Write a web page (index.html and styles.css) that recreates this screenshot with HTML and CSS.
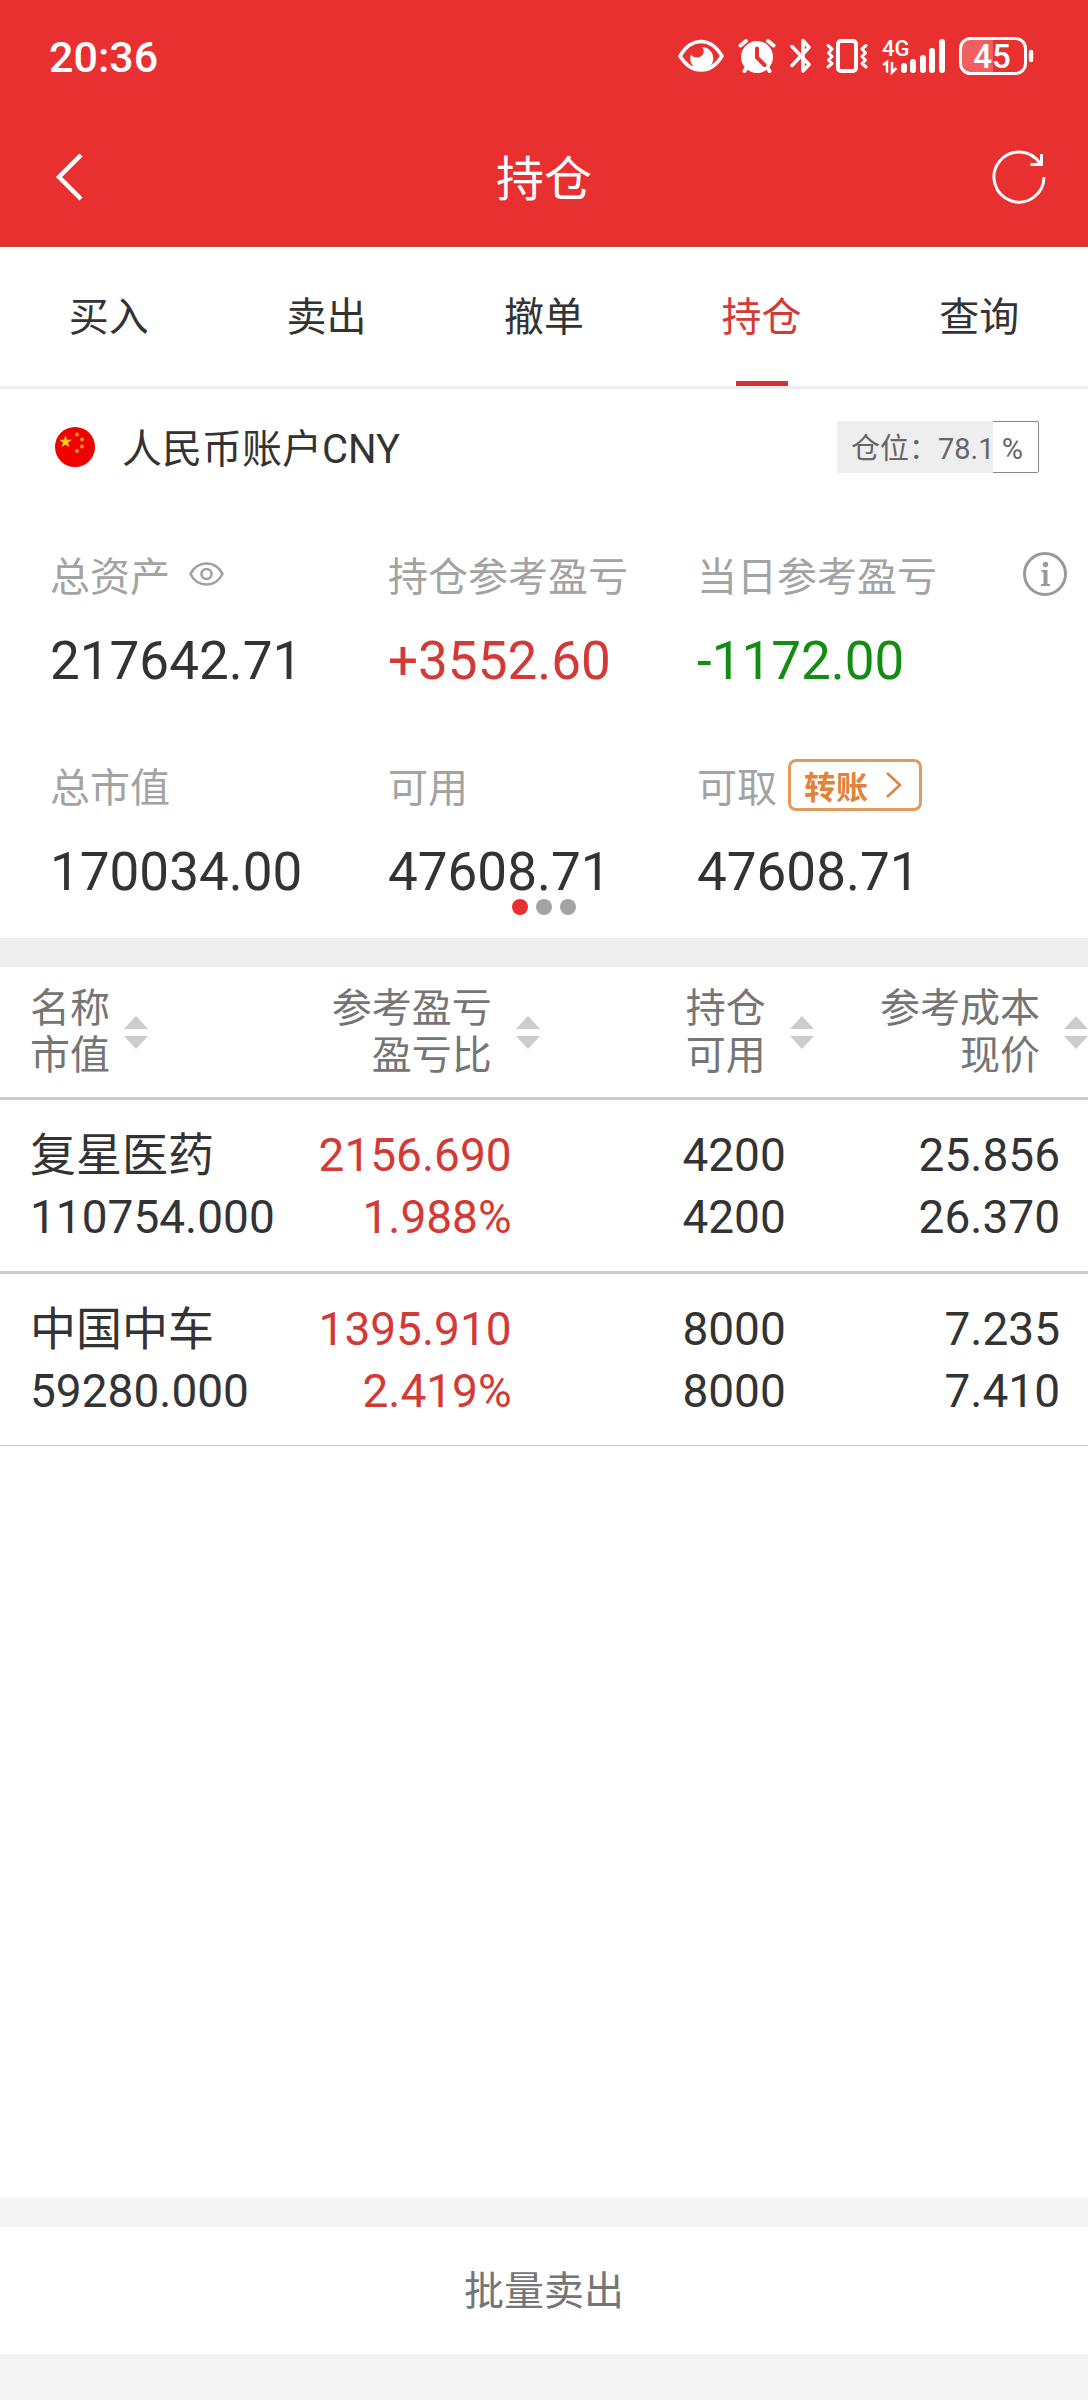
FILE: index.html
```html
<!DOCTYPE html>
<html lang="zh-CN">
<head>
<meta charset="utf-8">
<meta name="viewport" content="width=device-width, initial-scale=1">
<title>持仓</title>
<link rel="stylesheet" href="styles.css">
</head>
<body>
<div class="app">
  <div class="status-bar">
    <span class="clock">20:36</span>
    <div class="status-icons">
      <svg width="46" height="40" viewBox="0 0 46 40" aria-hidden="true">
        <path d="M2 19C8 9 15 4.500 23 4.500S38 9 44 19C38 29 31 33 23 33S8 29 2 19Z" fill="none" stroke="#fff" stroke-width="3.500" stroke-linejoin="round"/>
        <path d="M24 10A11.500 11.500 0 1 1 13 17.500C15 21 21 21.500 24 18.500 26.500 16 26 12.500 24 10Z" fill="#fff"/>
      </svg>
      <svg width="38" height="40" viewBox="0 0 38 40" aria-hidden="true">
        <g stroke="#fff" stroke-width="4" stroke-linecap="round" fill="none">
          <path d="M2.500 8.500 8 4M35.500 8.500 30 4M9 30 6.500 34M29 30l2.500 4"/>
        </g>
        <circle cx="19" cy="20" r="16" fill="#fff"/>
        <path d="M19 11.500V20.500L26.500 28" fill="none" stroke="#e83030" stroke-width="4" stroke-linecap="round"/>
      </svg>
      <svg width="22" height="40" viewBox="0 0 22 40" aria-hidden="true">
        <path d="M2 9.500 19 27.500 13 34V3.500L19 10.500 2 28.500" fill="none" stroke="#fff" stroke-width="3.500" stroke-linecap="round" stroke-linejoin="round"/>
      </svg>
      <svg width="42" height="40" viewBox="0 0 42 40" aria-hidden="true">
        <rect x="12" y="4" width="18" height="30" rx="3" fill="none" stroke="#fff" stroke-width="4"/>
        <path d="M2 8.500 6 12 2.500 16 6 19.500 2.500 23 6 26.500 2 30M40 8.500 36 12l3.500 4L36 19.500l3.500 3.500L36 26.500l4 3.500" fill="none" stroke="#fff" stroke-width="3" stroke-linecap="round" stroke-linejoin="round"/>
      </svg>
      <svg width="63" height="40" viewBox="0 0 63 40" aria-hidden="true">
        <text x="0" y="19" class="net-type">4G</text>
        <path d="M1 28 5 25V35.500M10 25V35.500L14.500 31" fill="none" stroke="#fff" stroke-width="2.500"/>
        <g stroke="#fff" stroke-width="6" stroke-linecap="round">
          <path d="M22 29V33M31 25V33M41 21V33M50 14V33M60 5V33"/>
        </g>
      </svg>
      <svg width="75" height="40" viewBox="0 0 75 40" aria-hidden="true">
        <path d="M34 3H12Q3 3 3 12V26Q3 35 12 35H34Z" fill="#f06060"/>
        <rect x="1.500" y="1.500" width="65" height="35" rx="10" fill="none" stroke="#fff" stroke-width="3"/>
        <path d="M72 15V23" stroke="#fff" stroke-width="4.500" stroke-linecap="round"/>
        <text x="33" y="31" text-anchor="middle" class="battery-level">45</text>
      </svg>
    </div>
  </div>

  <header class="nav-bar">
    <button class="icon-button" type="button" aria-label="返回">
      <svg width="30" height="50" viewBox="0 0 30 50"><path d="M27 3 5 25 27 47" fill="none" stroke="#fff" stroke-width="4.500"/></svg>
    </button>
    <h1 class="nav-title">持仓</h1>
    <button class="icon-button" type="button" aria-label="刷新">
      <svg width="54" height="54" viewBox="0 0 54 54" fill="none" stroke="#fff" stroke-width="3"><path d="M52 27A25 25 0 1 1 48 13.500"/><path d="M49.500 4V14.500H38.500"/></svg>
    </button>
  </header>

  <nav class="tabs">
    <a class="tab" href="#buy">买入</a>
    <a class="tab" href="#sell">卖出</a>
    <a class="tab" href="#cancel">撤单</a>
    <a class="tab tab-active" href="#position" aria-current="page">持仓</a>
    <a class="tab" href="#query">查询</a>
  </nav>

  <main class="content">
    <section class="account">
      <div class="account-head">
        <svg class="flag" width="40" height="40" viewBox="0 0 40 40" aria-hidden="true">
          <circle cx="20" cy="20" r="20" fill="#f00000"/>
          <path d="M10.500 8 12 12.700H17L13 15.600 14.500 20.300 10.500 17.400 6.500 20.300 8 15.600 4 12.700H9Z" fill="#ffd21a"/>
          <g fill="#f59a1a"><circle cx="22" cy="7.500" r="2"/><circle cx="27" cy="12.500" r="2"/><circle cx="27" cy="19.500" r="2"/><circle cx="22" cy="24" r="2"/></g>
        </svg>
        <h2 class="account-name">人民币账户CNY</h2>
        <div class="ratio">
          <div class="ratio-fill" style="width: 78.1%"></div>
          <span class="ratio-text">仓位：78.1 %</span>
        </div>
      </div>

      <dl class="stats">
        <div class="stat">
          <dt>总资产
            <button class="icon-button" type="button" aria-label="隐藏金额">
              <svg width="35" height="24" viewBox="0 0 35 24" fill="none" stroke="#a0a0a0" stroke-width="2.500"><path d="M1.500 12C5 5 11 1.500 17.500 1.500S30 5 33.500 12C30 19 24 22.500 17.500 22.500S5 19 1.500 12Z"/><circle cx="17.500" cy="12" r="5"/></svg>
            </button>
          </dt>
          <dd>217642.71</dd>
        </div>
        <div class="stat">
          <dt>持仓参考盈亏</dt>
          <dd class="up">+3552.60</dd>
        </div>
        <div class="stat">
          <dt>当日参考盈亏
            <button class="icon-button info-button" type="button" aria-label="说明">
              <svg width="44" height="44" viewBox="0 0 44 44"><circle cx="22" cy="22" r="20.500" fill="none" stroke="#999" stroke-width="3"/><circle cx="22.500" cy="12.500" r="2.700" fill="#999"/><path d="M18.500 18H24.500V32H27V34H18V32H20.500V20H18.500Z" fill="#999"/></svg>
            </button>
          </dt>
          <dd class="down">-1172.00</dd>
        </div>
        <div class="stat">
          <dt>总市值</dt>
          <dd>170034.00</dd>
        </div>
        <div class="stat">
          <dt>可用</dt>
          <dd>47608.71</dd>
        </div>
        <div class="stat">
          <dt>可取
            <button class="transfer" type="button">转账
              <svg width="16" height="26" viewBox="0 0 16 26"><path d="M1 1 14 13 1 25" fill="none" stroke="#e2833a" stroke-width="2.500"/></svg>
            </button>
          </dt>
          <dd>47608.71</dd>
        </div>
      </dl>
      <div class="pager"><i class="dot dot-active"></i><i class="dot"></i><i class="dot"></i></div>
    </section>

    <table class="holdings">
      <thead>
        <tr>
          <th scope="col"><button class="sort" type="button"><span>名称<br>市值</span><svg width="24" height="33" viewBox="0 0 24 33"><path d="M12 0 24 13H0ZM0 20H24L12 33Z"/></svg></button></th>
          <th scope="col"><button class="sort" type="button"><span>参考盈亏<br>盈亏比</span><svg width="24" height="33" viewBox="0 0 24 33"><path d="M12 0 24 13H0ZM0 20H24L12 33Z"/></svg></button></th>
          <th scope="col"><button class="sort" type="button"><span>持仓<br>可用</span><svg width="24" height="33" viewBox="0 0 24 33"><path d="M12 0 24 13H0ZM0 20H24L12 33Z"/></svg></button></th>
          <th scope="col"><button class="sort" type="button"><span>参考成本<br>现价</span><svg width="24" height="33" viewBox="0 0 24 33"><path d="M12 0 24 13H0ZM0 20H24L12 33Z"/></svg></button></th>
        </tr>
      </thead>
      <tbody>
        <tr>
          <td>复星医药<br>110754.000</td>
          <td class="up">2156.690<br>1.988%</td>
          <td>4200<br>4200</td>
          <td>25.856<br>26.370</td>
        </tr>
        <tr>
          <td>中国中车<br>59280.000</td>
          <td class="up">1395.910<br>2.419%</td>
          <td>8000<br>8000</td>
          <td>7.235<br>7.410</td>
        </tr>
      </tbody>
    </table>
  </main>

  <footer class="footer">
    <button class="batch-sell" type="button">批量卖出</button>
  </footer>
</div>
</body>
</html>
```
FILE: styles.css
```css
* {
  box-sizing: border-box;
}

body {
  margin: 0;
  background: #fff;
  color: #333;
  font-family: Roboto, "Noto Sans CJK SC", sans-serif;
  font-size: 40px;
}

button {
  margin: 0;
  padding: 0;
  border: 0;
  background: none;
  color: inherit;
  font: inherit;
}

svg {
  display: block;
  flex: none;
}

h1,
h2,
dl,
dd {
  margin: 0;
  font-weight: 400;
}

.app {
  display: flex;
  flex-direction: column;
  min-height: 100vh;
}

/* Status bar and title bar */
.status-bar {
  display: flex;
  align-items: center;
  justify-content: space-between;
  height: 107px;
  padding: 7px 54px 0 49px;
  background: #e83030;
  color: #fff;
}

.clock {
  font-size: 43px;
  font-weight: 500;
}

.status-icons {
  display: flex;
  gap: 14px;
}

.net-type {
  fill: #fff;
  font-size: 22px;
  font-weight: 500;
}

.battery-level {
  fill: #fff;
  font-size: 33px;
  font-weight: 500;
}

.nav-bar {
  display: flex;
  align-items: center;
  justify-content: space-between;
  height: 140px;
  padding: 0 42px 0 54px;
  border-bottom: 1px solid #c4443f;
  background: #e83030;
  color: #fff;
}

.nav-title {
  flex: 1;
  padding: 0 0 4px 12px;
  font-size: 48px;
  text-align: center;
}

/* Tabs */
.tabs {
  display: grid;
  grid-template-columns: repeat(5, 1fr);
  border-bottom: 3px solid #eee;
}

.tab {
  position: relative;
  padding-top: 3px;
  color: #333;
  line-height: 136px;
  text-align: center;
  text-decoration: none;
}

.tab-active {
  color: #d33a35;
}

.tab-active::after {
  content: "";
  position: absolute;
  bottom: 0;
  left: 50%;
  width: 52px;
  height: 5px;
  margin-left: -26px;
  background: #d23434;
}

/* Account summary */
.content {
  flex: 1;
}

.account {
  position: relative;
  padding: 32px 0 36px;
  border-bottom: 29px solid #eee;
}

.account-head {
  display: flex;
  align-items: center;
  height: 52px;
  padding: 0 49px 0 55px;
}

.account-name {
  flex: 1;
  padding: 0 0 2px 27px;
  font-size: 40px;
}

.ratio {
  position: relative;
  width: 202px;
  height: 52px;
  border: 1px solid #888;
  border-radius: 2px;
}

.ratio-fill {
  position: absolute;
  inset: -1px auto -1px -1px;
  background: #eee;
}

.ratio-text {
  position: relative;
  padding-left: 13px;
  color: #666;
  font-size: 29px;
  line-height: 50px;
  white-space: nowrap;
}

.stats {
  display: grid;
  grid-template-columns: 338fr 309fr 391fr;
  row-gap: 66px;
  padding: 73px 0 0 50px;
}

.stat dt {
  display: flex;
  align-items: center;
  height: 56px;
  margin-bottom: 29px;
  color: #a3a3a3;
}

.stat dt .icon-button {
  margin-left: 19px;
}

.stat dt .info-button {
  margin: 0 21px 0 auto;
}

.stat dd {
  font-size: 53px;
  line-height: 60px;
}

.stat .up,
.holdings .up {
  color: #d33a35;
}

.stat .down {
  color: #128c12;
}

.transfer {
  display: flex;
  align-items: center;
  gap: 18px;
  height: 52px;
  margin-left: 11px;
  padding: 0 17px 0 13px;
  border: 3px solid #e39a5c;
  border-radius: 8px;
  color: #e2833a;
  font-size: 32px;
  font-weight: 700;
}

.pager {
  position: absolute;
  bottom: 23px;
  left: 0;
  display: flex;
  justify-content: center;
  gap: 8px;
  width: 100%;
}

.dot {
  width: 16px;
  height: 16px;
  border-radius: 50%;
  background: #a3a3a3;
}

.dot-active {
  background: #e83030;
}

/* Holdings table */
.holdings {
  width: 100%;
  border-collapse: separate;
  border-spacing: 0;
  table-layout: fixed;
}

.holdings th {
  width: 25.2%;
  padding: 18px 0;
  border-bottom: 3px solid #ccc;
  color: #757575;
  font-weight: 400;
}

.holdings th:first-child {
  width: auto;
}

.sort {
  display: flex;
  align-items: center;
  justify-content: flex-end;
  gap: 24px;
  width: 100%;
  line-height: 47px;
  text-align: right;
}

.sort svg {
  fill: #ccc;
}

.holdings td {
  padding: 24px 28px 23px 0;
  border-bottom: 3px solid #ccc;
  font-size: 46px;
  line-height: 62px;
  text-align: right;
}

.holdings tbody tr:last-child td {
  border-bottom-width: 1px;
}

.holdings th:first-child,
.holdings td:first-child {
  padding-left: 30px;
  padding-right: 0;
  text-align: left;
}

.holdings th:first-child .sort {
  justify-content: flex-start;
  gap: 14px;
}

/* Bottom action */
.footer {
  padding: 29px 0 46px;
  background: #f4f4f4;
}

.batch-sell {
  display: block;
  width: 100%;
  padding-top: 3px;
  background: #fff;
  color: #757575;
  line-height: 124px;
}
```
